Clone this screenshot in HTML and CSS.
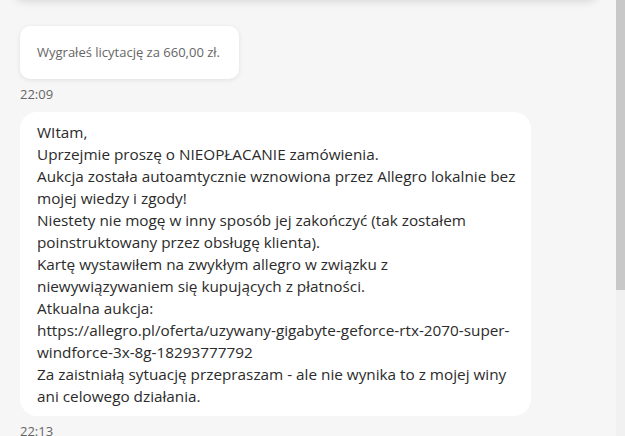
FILE: index.html
```html
<!DOCTYPE html>
<html lang="pl">
<head>
<meta charset="utf-8">
<title>Wiadomości</title>
<link rel="stylesheet" href="styles.css">
</head>
<body>
<div class="app">
  <div class="chat">
    <div class="header-card"></div>
    <div class="messages">
      <div class="bubble bubble-system">Wygrałeś licytację za 660,00 zł.</div>
      <div class="time">22:09</div>
      <div class="bubble bubble-text">WItam,<br>Uprzejmie proszę o NIEOPŁACANIE zamówienia.<br>Aukcja została autoamtycznie wznowiona przez Allegro lokalnie bez mojej wiedzy i zgody!<br>Niestety nie mogę w inny sposób jej zakończyć (tak zostałem poinstruktowany przez obsługę klienta).<br>Kartę wystawiłem na zwykłym allegro w związku z niewywiązywaniem się kupujących z płatności.<br>Atkualna aukcja:<br>https://allegro.pl/oferta/uzywany-gigabyte-geforce-rtx-2070-super-windforce-3x-8g-18293777792<br>Za zaistniałą sytuację przepraszam - ale nie wynika to z mojej winy ani celowego działania.</div>
      <div class="time">22:13</div>
    </div>
  </div>
  <div class="scrollbar"><div class="thumb"></div></div>
</div>
</body>
</html>
```

FILE: styles.css
```css
html, body {
  margin: 0;
  padding: 0;
}
body {
  background: #f6f6f6;
  font-family: "Open Sans", "Liberation Sans", sans-serif;
}
.app {
  display: flex;
  height: 436px;
  overflow: hidden;
}
.chat {
  flex: 1;
  height: 436px;
  overflow: hidden;
  background: #f6f6f6;
}
.scrollbar {
  width: 9px;
  flex: none;
  background: #f1f1f1;
}
.thumb {
  height: 290px;
  background: #c8c8c8;
}
.header-card {
  height: 40px;
  margin: -41px 18px 0 14px;
  background: #ffffff;
  border-radius: 10px;
  box-shadow: 0 2px 10px rgba(0, 0, 0, 0.14);
}
.messages {
  display: flex;
  flex-direction: column;
  align-items: flex-start;
  padding: 27px 0 0 20px;
}
.bubble {
  background: #ffffff;
  box-sizing: border-box;
}
.bubble-system {
  width: 219px;
  padding: 18px 17px 19px;
  border-radius: 10px;
  font-size: 13px;
  line-height: 16px;
  color: #666666;
  box-shadow: 0 1px 5px rgba(0, 0, 0, 0.09);
  white-space: nowrap;
}
.bubble-text {
  width: 511px;
  padding: 9px 12px 9px 17px;
  border-radius: 17px;
  font-size: 15.3px;
  line-height: 22px;
  color: #2b2b2b;
}
.time {
  margin: 7px 0 10px;
  font-size: 13px;
  line-height: 16px;
  color: #666666;
}
```
